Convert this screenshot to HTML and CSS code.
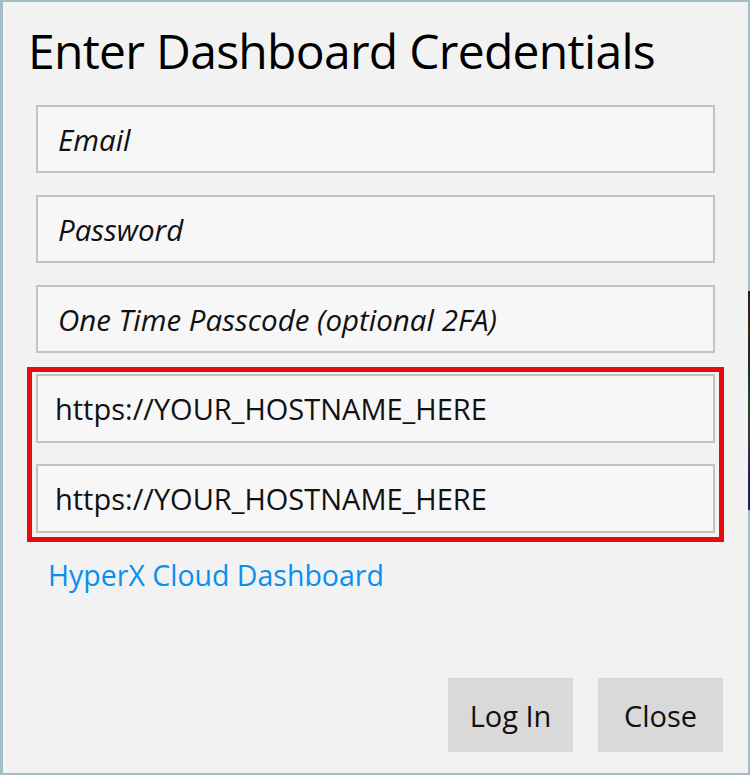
FILE: index.html
```html
<!DOCTYPE html>
<html lang="en">
<head>
  <meta charset="UTF-8">
  <meta name="viewport" content="width=device-width, initial-scale=1.0">
  <title>Enter Dashboard Credentials</title>
  <link rel="stylesheet" href="styles.css">
</head>
<body>
  <div class="dialog">
    <h1 class="title">Enter Dashboard Credentials</h1>

    <form class="fields" onsubmit="return false">
      <input type="text" class="field" placeholder="Email">
      <input type="password" class="field" placeholder="Password">
      <input type="text" class="field" placeholder="One Time Passcode (optional 2FA)">

      <!-- dashboard / api hosts -->
      <div class="hosts">
        <input type="text" class="field host" value="https://YOUR_HOSTNAME_HERE">
        <input type="text" class="field host" value="https://YOUR_HOSTNAME_HERE">
      </div>

      <a class="link" href="#">HyperX Cloud Dashboard</a>
    </form>

    <div class="buttons">
      <button type="button" class="btn">Log In</button>
      <button type="button" class="btn">Close</button>
    </div>
  </div>
</body>
</html>
```

FILE: styles.css
```css
html,
body {
  height: 100%;
}

body {
  margin: 0;
  font-family: 'Open Sans', 'Noto Sans', sans-serif;
  /* window frame, with a bit of the desktop showing on the right */
  background:
    linear-gradient(to bottom,
      transparent 0, transparent 291px,
      #2b1a1e 291px, #3a2a12 330px, #1d2636 360px, #1f4a22 400px,
      #3b3540 440px, #1a1f6a 480px, #1a1f6a 510px,
      transparent 510px) right top / 2px 100% no-repeat,
    #a4bcc6;
  overflow: hidden;
}

.dialog {
  box-sizing: border-box;
  height: calc(100% - 4px);
  margin: 2px 2px 2px 3px;
  background-color: #f2f2f2;
  display: flex;
  flex-direction: column;
}

.title {
  margin: 0;
  padding: 21px 0 0 25px;
  font-size: 48px;
  font-weight: normal;
  line-height: 56px;
  color: #000;
  letter-spacing: -0.7px;
}

.fields {
  display: flex;
  flex-direction: column;
  gap: 22px;
  padding: 0 33px;
  margin-top: 26px;
}

.field {
  box-sizing: border-box;
  width: 100%;
  height: 68px;
  margin: 0;
  padding: 0 20px;
  border: 2px solid #c3c3c3;
  border-radius: 0;
  background-color: #f7f7f7;
  font-family: inherit;
  font-size: 29px;
  color: #111;
  outline: none;
}

.field::placeholder {
  color: #111;
  font-style: italic;
  font-size: 29.5px;
  opacity: 1;
}

.hosts {
  display: flex;
  flex-direction: column;
  gap: 21px;
  margin: -8px -9px 0;
  padding: 2px 4px 4px;
  border: 5px solid #e50b0e;
}

.host {
  height: 69px;
  padding: 0 17px;
}

.link {
  margin: -8px 0 0 12px;
  font-size: 28.5px;
  color: #0a8ff0;
  text-decoration: none;
}

.buttons {
  display: flex;
  justify-content: flex-end;
  gap: 25px;
  margin-top: auto;
  padding: 0 25px 21px 0;
}

.btn {
  width: 125px;
  height: 74px;
  border: none;
  border-radius: 0;
  background-color: #d9d9d9;
  font-family: inherit;
  font-size: 29px;
  color: #111;
  cursor: pointer;
}

.btn:hover {
  background-color: #cfcfcf;
}
```
